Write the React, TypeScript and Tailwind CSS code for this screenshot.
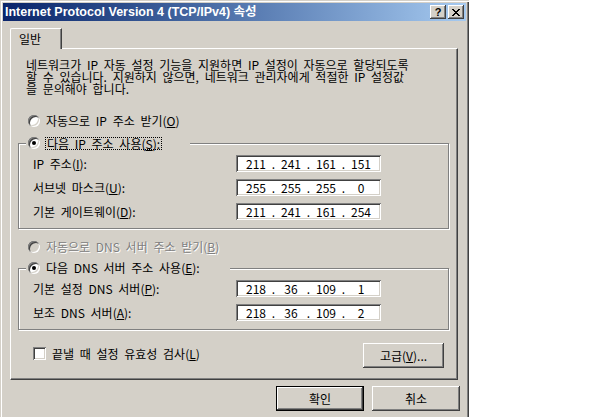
import { Fragment } from "react";

const raised =
  "shadow-[inset_-1px_-1px_0_#404040,inset_1px_1px_0_#ffffff,inset_-2px_-2px_0_#808080,inset_2px_2px_0_#d4d0c8]";
const sunken =
  "shadow-[inset_1px_1px_0_#808080,inset_-1px_-1px_0_#ffffff,inset_2px_2px_0_#404040,inset_-2px_-2px_0_#d4d0c8]";
const etched = "border border-[#808080] shadow-[1px_1px_0_#ffffff,inset_1px_1px_0_#ffffff]";

function Radio({ checked, disabled }: { checked?: boolean; disabled?: boolean }) {
  return (
    <span
      className={`flex size-[12px] shrink-0 items-center justify-center rounded-full ${
        disabled ? "bg-[#d4d0c8]" : "bg-white"
      } ${sunken}`}
    >
      {checked && <span className="size-[4px] rounded-full bg-black" />}
    </span>
  );
}

function IpField({ parts }: { parts: string[] }) {
  return (
    <div className={`flex h-[17px] w-[145px] items-center bg-white pl-[5px] leading-none ${sunken}`}>
      {parts.map((p, i) => (
        <Fragment key={i}>
          <span className="w-[30px] text-center">{p}</span>
          {i < 3 && <span className="w-[5px] text-center">.</span>}
        </Fragment>
      ))}
    </div>
  );
}

function Row({ label, keyChar, parts }: { label: string; keyChar: string; parts: string[] }) {
  return (
    <div className="flex h-[17px] items-center">
      <span className="w-[203px]">
        {label}(<u>{keyChar}</u>):
      </span>
      <IpField parts={parts} />
    </div>
  );
}

export default function App() {
  return (
    <div className="h-[417px] overflow-hidden bg-white font-['Noto_Sans_CJK_KR',sans-serif] text-[12px] text-black [word-spacing:3px]">
      <div className="h-[420px] w-[469px] bg-[#d4d0c8] p-[3px] shadow-[inset_1px_1px_0_#d4d0c8,inset_2px_2px_0_#ffffff,inset_-1px_-1px_0_#404040,inset_-2px_-2px_0_#808080]">
        {/* title bar */}
        <div className="flex h-[18px] items-center justify-between bg-gradient-to-r from-[#0a246a] to-[#a6caf0] pl-[2px] pr-[2px]">
          <span className="whitespace-nowrap font-['Liberation_Sans','Noto_Sans_CJK_KR',sans-serif] text-[12.5px] font-bold leading-none text-white [word-spacing:0]">
            Internet Protocol Version 4 (TCP/IPv4) 속성
          </span>
          <div className="flex gap-[2px]">
            <span className={`flex h-[14px] w-[16px] items-center justify-center bg-[#d4d0c8] font-['Liberation_Sans',sans-serif] text-[11px] font-bold leading-none ${raised}`}>
              ?
            </span>
            <span className={`flex h-[14px] w-[16px] items-center justify-center bg-[#d4d0c8] ${raised}`}>
              <svg width="8" height="7" viewBox="0 0 8 7" shapeRendering="crispEdges">
                <path d="M0 0h2v1H0zM6 0h2v1H6zM1 1h2v1H1zM5 1h2v1H5zM2 2h4v1H2zM3 3h2v1H3zM2 4h4v1H2zM1 5h2v1H1zM5 5h2v1H5zM0 6h2v1H0zM6 6h2v1H6z" fill="#000" />
              </svg>
            </span>
          </div>
        </div>

        <div className="pl-[7px]">
          {/* tab strip */}
          <div className="mt-[7px] flex">
            <div className="relative z-10 -mb-px flex h-[21px] w-[52px] items-start rounded-tl-[2px] border-l border-t border-r border-l-white border-t-white border-r-[#404040] bg-[#d4d0c8] pl-[8px] pt-[1px] shadow-[inset_-1px_0_0_#808080]">
              일반
            </div>
          </div>

          {/* panel */}
          <div className="flex h-[332px] w-[448px] flex-col border border-l-white border-t-white border-r-[#404040] border-b-[#404040] shadow-[inset_-1px_-1px_0_#808080]">
            <div className="ml-[15px] mt-[10px] whitespace-nowrap leading-[12px]">
              <div>네트워크가 IP 자동 설정 기능을 지원하면 IP 설정이 자동으로 할당되도록</div>
              <div>할 수 있습니다. 지원하지 않으면, 네트워크 관리자에게 적절한 IP 설정값</div>
              <div>을 문의해야 합니다.</div>
            </div>

            <div className="ml-[17px] mt-[18px] flex h-[16px] items-center gap-[6px]">
              <Radio />
              <span>
                자동으로 IP 주소 받기(<u>O</u>)
              </span>
            </div>

            {/* static IP group */}
            <div className={`relative ml-[7px] mt-[14px] h-[86px] w-[431px] pl-[14px] pt-[11px] ${etched}`}>
              <div className="absolute -top-[9px] left-[7px] flex h-[16px] w-[164px] items-center gap-[5px] bg-[#d4d0c8] pl-[2px]">
                <Radio checked />
                <span className="border border-dotted border-black px-px leading-[11px]">
                  다음 IP 주소 사용(<u>S</u>):
                </span>
              </div>
              <div className="flex flex-col gap-[7px]">
                <Row label="IP 주소" keyChar="I" parts={["211", "241", "161", "151"]} />
                <Row label="서브넷 마스크" keyChar="U" parts={["255", "255", "255", "0"]} />
                <Row label="기본 게이트웨이" keyChar="D" parts={["211", "241", "161", "254"]} />
              </div>
            </div>

            <div className="ml-[17px] mt-[10px] flex h-[16px] items-center gap-[6px] text-[#808080] [text-shadow:1px_1px_0_#ffffff]">
              <Radio disabled />
              <span>
                자동으로 DNS 서버 주소 받기(<u>B</u>)
              </span>
            </div>

            {/* DNS group */}
            <div className={`relative ml-[7px] mt-[13px] h-[62px] w-[431px] pl-[14px] pt-[11px] ${etched}`}>
              <div className="absolute -top-[9px] left-[7px] flex h-[16px] w-[204px] items-center gap-[6px] bg-[#d4d0c8] pl-[2px]">
                <Radio checked />
                <span>
                  다음 DNS 서버 주소 사용(<u>E</u>):
                </span>
              </div>
              <div className="flex flex-col gap-[7px]">
                <Row label="기본 설정 DNS 서버" keyChar="P" parts={["218", "36", "109", "1"]} />
                <Row label="보조 DNS 서버" keyChar="A" parts={["218", "36", "109", "2"]} />
              </div>
            </div>

            <div className="mt-[13px] flex h-[25px] items-start justify-between pl-[22px] pr-[13px]">
              <div className="mt-[4px] flex items-center gap-[6px]">
                <span className={`size-[13px] bg-white ${sunken}`} />
                <span className="leading-[13px]">
                  끝낼 때 설정 유효성 검사(<u>L</u>)
                </span>
              </div>
              <button className={`flex h-[25px] w-[81px] items-center justify-center bg-[#d4d0c8] ${raised}`}>
                고급(<u>V</u>)...
              </button>
            </div>
          </div>

          {/* dialog buttons */}
          <div className="mt-[6px] flex justify-end gap-[8px] pr-[6px]">
            <button className="h-[25px] w-[88px] border border-black bg-[#d4d0c8]">
              <span className={`flex h-full w-full items-center justify-center ${raised}`}>확인</span>
            </button>
            <button className={`flex h-[25px] w-[88px] items-center justify-center bg-[#d4d0c8] ${raised}`}>취소</button>
          </div>
        </div>
      </div>
    </div>
  );
}
